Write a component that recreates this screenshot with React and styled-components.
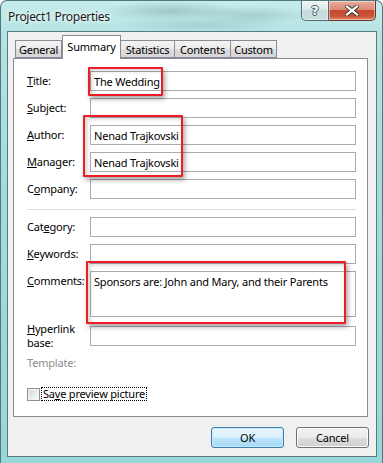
import React from "react";
import styled, { createGlobalStyle } from "styled-components";

const GlobalStyle = createGlobalStyle`
  html, body {
    margin: 0;
    padding: 0;
    background: #ffffff;
  }
  body {
    font-family: "Noto Sans", "Open Sans", sans-serif;
    color: #000;
  }
`;

const Window = styled.div`
  position: relative;
  width: 383px;
  height: 463px;
  box-sizing: border-box;
  display: flex;
  flex-direction: column;
  padding: 0 5px 6px 6px;
  border: 1px solid #52777c;
  border-bottom: none;
  border-radius: 7px 7px 0 0;
  overflow: hidden;
  background:
    radial-gradient(ellipse 70px 10px at 170px 10px, rgba(70, 110, 115, 0.28), transparent),
    radial-gradient(ellipse 60px 9px at 250px 14px, rgba(70, 110, 115, 0.22), transparent),
    radial-gradient(ellipse 90px 8px at 200px 24px, rgba(70, 110, 115, 0.18), transparent),
    linear-gradient(180deg, #c6ecec 0%, #b3e3e3 8%, #a3dcdd 40%, #98d7d9 100%);
`;

const TitleBar = styled.div`
  height: 30px;
  display: flex;
  align-items: flex-start;
`;

const Caption = styled.div`
  margin: 7px 0 0 1px;
  font-size: 12px;
  letter-spacing: -0.3px;
  color: #1b1b1b;
  text-shadow: 0 0 6px rgba(255, 255, 255, 0.95), 0 0 3px rgba(255, 255, 255, 0.9);
`;

const CaptionButtons = styled.div`
  margin-left: auto;
  margin-right: 1px;
  display: flex;
  height: 20px;
`;

const CaptionButton = styled.div`
  width: ${({ $w }) => $w}px;
  height: 20px;
  box-sizing: border-box;
  display: flex;
  align-items: center;
  justify-content: center;
  border: 1px solid ${({ $close }) => ($close ? "#6b3328" : "#4f6c72")};
  border-top: none;
  border-left: ${({ $close }) => ($close ? "none" : "1px solid #4f6c72")};
  border-radius: ${({ $close }) => ($close ? "0 0 5px 0" : "0 0 0 5px")};
  box-shadow: inset 0 0 0 1px rgba(255, 255, 255, 0.45);
  background: ${({ $close }) =>
    $close
      ? "linear-gradient(180deg, #e9ab9d 0%, #dc8a77 45%, #c84a31 50%, #c9543a 80%, #dc8a5e 100%)"
      : "linear-gradient(180deg, #f0f6f6 0%, #dde9ea 45%, #c6d9db 50%, #c9dddf 100%)"};
  font-family: "DejaVu Sans", sans-serif;
  font-weight: bold;
  font-size: 13px;
  color: #ffffff;
  text-shadow: -1px 0 #45595c, 1px 0 #45595c, 0 -1px #45595c, 0 1px #45595c;
`;

const Client = styled.div`
  flex: 1;
  display: flex;
  flex-direction: column;
  box-sizing: border-box;
  padding: 3px 7px 0 5px;
  background: #f0f0f0;
  border: 1px solid #5a7a80;
  font-size: 11px;
  letter-spacing: -0.2px;
`;

const TabStrip = styled.div`
  position: relative;
  z-index: 1;
  height: 23px;
  display: flex;
  align-items: flex-end;
  padding-left: 2px;
`;

const Tab = styled.div`
  width: ${({ $w }) => $w}px;
  height: ${({ $active }) => ($active ? 24 : 18)}px;
  margin-bottom: ${({ $active }) => ($active ? -1 : 0)}px;
  box-sizing: border-box;
  display: flex;
  justify-content: center;
  padding-top: ${({ $active }) => ($active ? 3 : 1)}px;
  border: 1px solid #898c95;
  border-bottom: ${({ $active }) => ($active ? "none" : "1px solid #898c95")};
  border-left: ${({ $first, $active }) => ($first || $active ? "1px solid #898c95" : "none")};
  background: ${({ $active }) =>
    $active ? "#ffffff" : "linear-gradient(180deg, #f3f3f3 0%, #ebebeb 50%, #dddddd 51%, #d6d6d6 100%)"};
  font-size: 11px;
  line-height: 15px;
  letter-spacing: -0.2px;
`;

const Pane = styled.div`
  position: relative;
  width: 355px;
  height: 359px;
  box-sizing: border-box;
  padding: 12px 11px 0 13px;
  background: #ffffff;
  border: 1px solid #898c95;
`;

const Row = styled.div`
  display: flex;
  align-items: ${({ $top }) => ($top ? "flex-start" : "center")};
  margin-top: ${({ $mt }) => $mt ?? 7}px;
`;

const Label = styled.div`
  width: 63px;
  flex-shrink: 0;
  line-height: ${({ $lh }) => $lh ?? 20}px;
  color: ${({ $disabled }) => ($disabled ? "#8d8d8d" : "#000")};
`;

const TextBox = styled.input`
  flex: 1;
  min-width: 0;
  height: 20px;
  box-sizing: border-box;
  margin: 0;
  padding: 0 3px;
  border: 1px solid #a9abae;
  background: #ffffff;
  font-family: inherit;
  font-size: 11px;
  letter-spacing: -0.2px;
  color: #000;
  outline: none;
`;

const TextArea = styled.textarea`
  flex: 1;
  min-width: 0;
  height: 46px;
  box-sizing: border-box;
  margin: 0;
  padding: 3px 3px;
  border: 1px solid #a9abae;
  background: #ffffff;
  font-family: inherit;
  font-size: 11px;
  line-height: 14px;
  letter-spacing: -0.2px;
  color: #000;
  resize: none;
  overflow: hidden;
  outline: none;
`;

const Separator = styled.div`
  height: 1px;
  margin: 10px 0 7px;
  background: #d5dfe5;
`;

const CheckRow = styled.div`
  display: flex;
  align-items: center;
  height: 16px;
  margin-top: 13px;
  gap: 2px;
`;

const CheckBox = styled.div`
  width: 13px;
  height: 13px;
  box-sizing: border-box;
  border: 1px solid #8f8f8f;
  background: linear-gradient(135deg, #d0d3d8 0%, #eeeeee 60%, #fbfbfb 100%);
  box-shadow: inset 0 0 0 1px #f4f4f4;
`;

const FocusLabel = styled.div`
  padding: 0 1px;
  line-height: 12px;
  outline: 1px dotted #000;
  outline-offset: 0;
`;

const ButtonRow = styled.div`
  display: flex;
  justify-content: flex-end;
  gap: 12px;
  margin-top: 10px;
`;

const Button = styled.div`
  width: 73px;
  height: 21px;
  box-sizing: border-box;
  display: flex;
  align-items: center;
  justify-content: center;
  border-radius: 3px;
  border: 1px solid ${({ $default }) => ($default ? "#3c7fb1" : "#707070")};
  box-shadow: inset 0 0 0 1px ${({ $default }) => ($default ? "#c6e8fa" : "#fcfcfc")};
  background: ${({ $default }) =>
    $default
      ? "linear-gradient(180deg, #eaf6fd 0%, #d9f0fc 50%, #bee6fd 51%, #a7d9f5 100%)"
      : "linear-gradient(180deg, #f2f2f2 0%, #ebebeb 50%, #dddddd 51%, #cfcfcf 100%)"};
`;

const Highlight = styled.div`
  position: absolute;
  left: ${({ $x }) => $x}px;
  top: ${({ $y }) => $y}px;
  width: ${({ $w }) => $w}px;
  height: ${({ $h }) => $h}px;
  box-sizing: border-box;
  border: 2px solid #ee1c24;
  border-radius: 1px;
  box-shadow: 2px 3px 5px rgba(0, 0, 0, 0.35), inset 2px 2px 4px rgba(0, 0, 0, 0.18);
  pointer-events: none;
`;

const CloseGlyph = () => (
  <svg width="14" height="11" viewBox="0 0 14 11">
    <path d="M2 1.5 L12 9.5 M12 1.5 L2 9.5" stroke="#4a3a36" strokeWidth="4.2" strokeLinecap="square" />
    <path d="M2 1.5 L12 9.5 M12 1.5 L2 9.5" stroke="#ffffff" strokeWidth="2.2" strokeLinecap="square" />
  </svg>
);

const tabs = [
  { name: "General", w: 47 },
  { name: "Summary", w: 59, active: true },
  { name: "Statistics", w: 54 },
  { name: "Contents", w: 56 },
  { name: "Custom", w: 46 },
];

export default function App() {
  return (
    <>
      <GlobalStyle />
      <Window>
        <TitleBar>
          <Caption>Project1 Properties</Caption>
          <CaptionButtons>
            <CaptionButton $w={28}>?</CaptionButton>
            <CaptionButton $w={47} $close>
              <CloseGlyph />
            </CaptionButton>
          </CaptionButtons>
        </TitleBar>
        <Client>
          <TabStrip>
            {tabs.map((t, i) => (
              <Tab key={t.name} $w={t.w} $active={t.active} $first={i === 0}>
                {t.name}
              </Tab>
            ))}
          </TabStrip>
          <Pane>
            <Row $mt={0}>
              <Label><u>T</u>itle:</Label>
              <TextBox readOnly defaultValue="The Wedding" />
            </Row>
            <Row>
              <Label><u>S</u>ubject:</Label>
              <TextBox readOnly defaultValue="" />
            </Row>
            <Row>
              <Label><u>A</u>uthor:</Label>
              <TextBox readOnly defaultValue="Nenad Trajkovski" />
            </Row>
            <Row>
              <Label><u>M</u>anager:</Label>
              <TextBox readOnly defaultValue="Nenad Trajkovski" />
            </Row>
            <Row>
              <Label>C<u>o</u>mpany:</Label>
              <TextBox readOnly defaultValue="" />
            </Row>
            <Separator />
            <Row $mt={0}>
              <Label>Cat<u>e</u>gory:</Label>
              <TextBox readOnly defaultValue="" />
            </Row>
            <Row>
              <Label><u>K</u>eywords:</Label>
              <TextBox readOnly defaultValue="" />
            </Row>
            <Row $top>
              <Label><u>C</u>omments:</Label>
              <TextArea readOnly defaultValue="Sponsors are: John and Mary, and their Parents" />
            </Row>
            <Row $mt={5}>
              <Label $lh={14}><u>H</u>yperlink<br />base:</Label>
              <TextBox readOnly defaultValue="" />
            </Row>
            <Row $mt={3}>
              <Label $disabled>Template:</Label>
            </Row>
            <CheckRow>
              <CheckBox />
              <FocusLabel>Sa<u>v</u>e preview picture</FocusLabel>
            </CheckRow>

            <Highlight $x={74} $y={8} $w={75} $h={29} />
            <Highlight $x={69} $y={56} $w={100} $h={62} />
            <Highlight $x={72} $y={202} $w={260} $h={63} />
          </Pane>
          <ButtonRow>
            <Button $default>OK</Button>
            <Button>Cancel</Button>
          </ButtonRow>
        </Client>
      </Window>
    </>
  );
}
